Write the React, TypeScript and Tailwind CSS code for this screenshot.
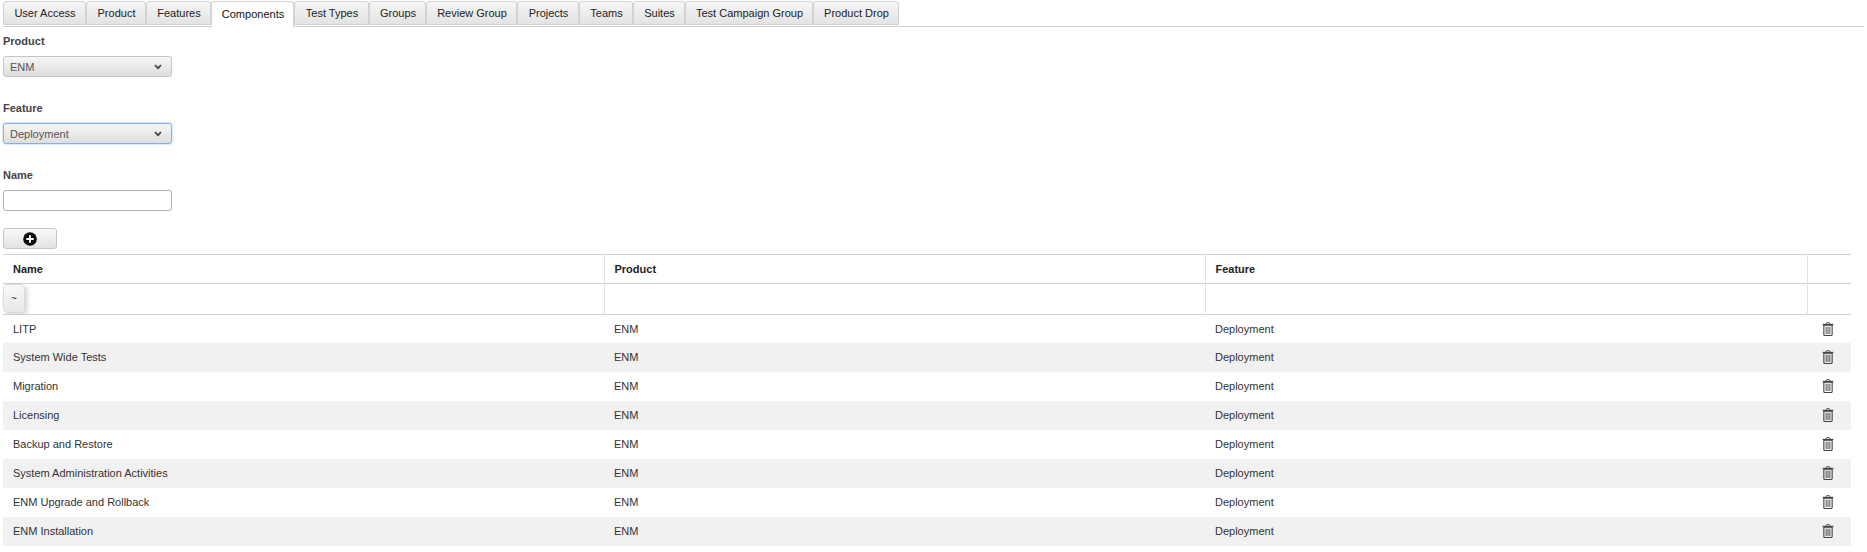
const tabs: [string, number][] = [["User Access",83],["Product",60],["Features",65],["Components",83],["Test Types",75],["Groups",57],["Review Group",91],["Projects",62],["Teams",54],["Suites",52],["Test Campaign Group",128],["Product Drop",86]];
const rows = ["LITP","System Wide Tests","Migration","Licensing","Backup and Restore","System Administration Activities","ENM Upgrade and Rollback","ENM Installation"];

function Chevron() {
  return <svg width="8" height="6" viewBox="0 0 8 6" className="absolute right-[9px] top-1/2 -translate-y-1/2"><path d="M1 1.2 4 4.2l3-3" fill="none" stroke="#444" strokeWidth="1.7"/></svg>;
}
function Trash() {
  return <svg width="12" height="14" viewBox="0 0 13 15" className="block"><path d="M4.5 2V1.4C4.5.9 5 .6 5.5.6h2c.5 0 1 .3 1 .8V2" fill="none" stroke="#444" strokeWidth="1"/><path d="M.7 2.6h11.6" stroke="#444" strokeWidth="1.4"/><path d="M2 3.5h9v10c0 .7-.5 1-1 1H3c-.5 0-1-.3-1-1z" fill="none" stroke="#444" strokeWidth="1.2"/><path d="M4.5 5v8M6.5 5v8M8.5 5v8" stroke="#444" strokeWidth="1"/></svg>;
}
const selectCls = "relative flex items-center w-[169px] h-[21px] rounded-[3px] border bg-gradient-to-b from-[#f6f6f6] to-[#dedede] pl-[6px] pt-[2px] text-[11px] text-[#555]";

export default function App() {
  return (
    <div className="min-h-[552px] bg-white px-[3px] pt-px text-[11px] leading-[13px] text-[#333]" style={{fontFamily:'"Liberation Sans", Arial, sans-serif'}}>
      <div className="flex h-[26px] border-b border-[#cfcfcf]">
        {tabs.map(([t,w]) => {
          const active = t === "Components";
          return <div key={t} style={{width:w}} className={active
            ? "flex h-[26px] items-center justify-center rounded-t-[3px] border border-b-0 border-[#d3d3d3] bg-white pb-[1px] pl-px text-[#111]"
            : "flex h-[24px] items-center justify-center rounded-t-[3px] border border-[#d3d3d3] bg-gradient-to-b from-[#f6f6f6] to-[#e3e3e3] pl-px text-[#222]"}>{t}</div>;
        })}
      </div>
      <div className="mt-[8px] font-bold text-[#444]">Product</div>
      <div className={selectCls + " mt-[8px] border-[#c5c5c5]"}>ENM<Chevron/></div>
      <div className="mt-[25px] font-bold text-[#444]">Feature</div>
      <div className={selectCls + " mt-[8px] border-[#7fb0f5] shadow-[0_0_2px_#78aef5]"}>Deployment<Chevron/></div>
      <div className="mt-[25px] font-bold text-[#444]">Name</div>
      <div className="mt-[8px] h-[21px] w-[169px] rounded-[3px] border border-[#b0b0b0] bg-white"/>
      <div className="mt-[17px] flex h-[21px] w-[54px] items-center justify-center rounded-[3px] border border-[#c5c5c5] bg-gradient-to-b from-[#f8f8f8] to-[#e3e3e3]">
        <svg width="14" height="14" viewBox="0 0 15 15"><circle cx="7.5" cy="7.5" r="7.3" fill="#0b0b0b"/><path d="M7.5 3.5v8M3.5 7.5h8" stroke="#fff" strokeWidth="2"/></svg>
      </div>
      <table className="mt-[5px] w-[1848px] table-fixed border-collapse text-[11px]">
        <colgroup><col className="w-[601px]"/><col className="w-[601px]"/><col className="w-[602px]"/><col className="w-[44px]"/></colgroup>
        <thead>
          <tr className="h-[29px] border-y border-[#cfcfcf] text-[#222]">
            {["Name","Product","Feature",""].map((h,i)=>(
              <th key={i} className="border-l border-[#e3e3e3] pl-[10px] text-left font-bold first:border-l-0">{h}</th>
            ))}
          </tr>
          <tr className="h-[31px] border-b border-[#cfcfcf]">
            <th className="p-0 text-left align-top">
              <div className="flex h-[29px] w-[22px] items-center justify-center rounded-[5px] border border-[#dcdcdc] bg-gradient-to-b from-[#f8f8f8] to-[#e8e8e8] text-[10px] font-normal shadow-[2px_2px_4px_#d0d0d0]">~</div>
            </th>
            <th className="border-l border-[#e3e3e3]"/><th className="border-l border-[#e3e3e3]"/><th className="border-l border-[#e3e3e3]"/>
          </tr>
        </thead>
        <tbody>
          {rows.map((r,i)=>(
            <tr key={r} className={(i===0 ? "h-[28px] " : "h-[29px] ") + "text-[#333] " + (i%2===1 ? "bg-[#f1f1f1]" : "bg-white")}>
              <td className="pl-[10px] pt-px">{r}</td>
              <td className="pl-[10px] pt-px">ENM</td>
              <td className="pl-[10px] pt-px">Deployment</td>
              <td><div className="flex justify-center pr-[2px]"><Trash/></div></td>
            </tr>
          ))}
        </tbody>
      </table>
    </div>
  );
}
